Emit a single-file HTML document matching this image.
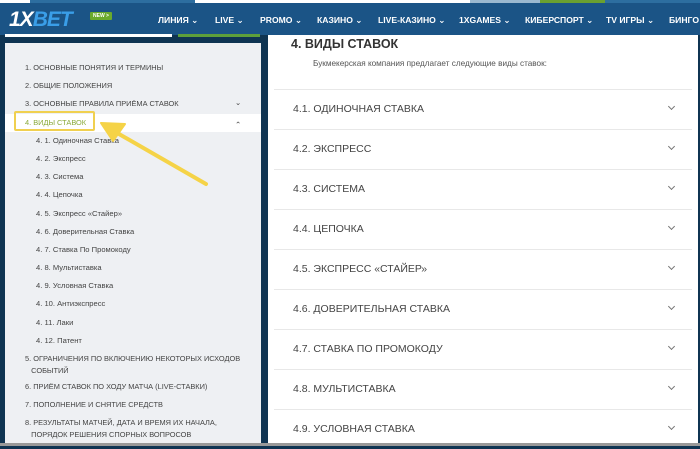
<!DOCTYPE html>
<html><head><meta charset="utf-8"><style>
*{margin:0;padding:0;box-sizing:border-box}
body{width:700px;height:446px;overflow:hidden;background:#0f3452;font-family:"Liberation Sans","DejaVu Sans",sans-serif;position:relative}
.top{position:absolute;left:0;top:0;width:700px;height:4px;background:#fff}
.hdr{position:absolute;left:0;top:3px;width:700px;height:32px;background:#1b5486}
.logo{position:absolute;left:9px;top:5px;color:#fff;font-weight:bold;font-style:italic;font-size:21px;letter-spacing:-1px}
.logo b{color:#3a9ee8}
.new{position:absolute;left:90px;top:9px;background:#6aaa2c;color:#fff;font-size:5px;padding:1px 3px;border-radius:1px;font-weight:bold}
.nav{position:absolute;top:15px;color:#fff;font-size:8.6px;font-weight:bold;white-space:nowrap}
.nav span{position:absolute}
.left{position:absolute;left:5px;top:43px;width:256px;height:401px;background:#eef0f3}
.bar1{position:absolute;left:5px;top:34px;width:167px;height:3px;background:#fff}
.bar2{position:absolute;left:178px;top:34px;width:82px;height:3px;background:#5d9f3a}
.li{position:absolute;font-size:7.4px;color:#444;white-space:nowrap;line-height:12px}
.sub{left:36px;font-size:7.6px}
.main{left:25px}
.right{position:absolute;left:268px;top:35px;width:430px;height:409px;background:#fff}
.h{position:absolute;left:291px;top:37px;font-size:12.5px;font-weight:bold;color:#333}
.p{position:absolute;left:313px;top:59px;font-size:8.2px;color:#555}
.row{position:absolute;left:274px;width:418px;height:40px;border-top:1px solid #e8e8e8}
.row span{position:absolute;left:19px;top:13px;font-size:10.5px;color:#444}
.chev{position:absolute;right:18px;top:14px;width:5px;height:5px;border-right:1px solid #777;border-bottom:1px solid #777;transform:rotate(45deg)}
.bot{position:absolute;left:0;top:443px;width:700px;height:3px;background:#999}
</style></head><body>
<div class="top"></div>
<div style="position:absolute;left:30px;top:0;width:165px;height:3px;background:#2d6ea0"></div>
<div style="position:absolute;left:470px;top:0;width:70px;height:3px;background:#9ab8d0"></div>
<div style="position:absolute;left:540px;top:0;width:65px;height:3px;background:#6aa030"></div>
<div style="position:absolute;left:605px;top:0;width:95px;height:3px;background:#2d6ea0"></div>
<div class="hdr">
<div class="logo">1X<b>BET</b></div>
<div class="new">NEW &gt;</div>
</div>
<div class="nav">
<span style="left:158px">ЛИНИЯ ⌄</span>
<span style="left:215px">LIVE ⌄</span>
<span style="left:260px">PROMO ⌄</span>
<span style="left:317px">КАЗИНО ⌄</span>
<span style="left:378px">LIVE-КАЗИНО ⌄</span>
<span style="left:459px">1XGAMES ⌄</span>
<span style="left:525px">КИБЕРСПОРТ ⌄</span>
<span style="left:606px">TV ИГРЫ ⌄</span>
<span style="left:669px">БИНГО ⌄</span>
</div>
<div class="bar1"></div><div class="bar2"></div>
<div class="left"></div>
<div style="position:absolute;left:5px;top:114px;width:256px;height:18px;background:#fff"></div>
<div class="li main" style="top:62px">1. ОСНОВНЫЕ ПОНЯТИЯ И ТЕРМИНЫ</div>
<div class="li main" style="top:80px">2. ОБЩИЕ ПОЛОЖЕНИЯ</div>
<div class="li main" style="top:98px">3. ОСНОВНЫЕ ПРАВИЛА ПРИЁМА СТАВОК</div>
<div class="li" style="left:235px;top:97px">⌄</div>
<div class="li main" style="top:117px;color:#8aaa3a">4. ВИДЫ СТАВОК</div>
<div class="li" style="left:235px;top:119px">⌃</div>
<div style="position:absolute;left:14px;top:111px;width:81px;height:20px;border:2px solid #f0d050;border-radius:2px"></div>
<div class="li sub" style="top:135px">4. 1. Одиночная Ставка</div>
<div class="li sub" style="top:153px">4. 2. Экспресс</div>
<div class="li sub" style="top:171px">4. 3. Система</div>
<div class="li sub" style="top:189px">4. 4. Цепочка</div>
<div class="li sub" style="top:208px">4. 5. Экспресс «Стайер»</div>
<div class="li sub" style="top:226px">4. 6. Доверительная Ставка</div>
<div class="li sub" style="top:244px">4. 7. Ставка По Промокоду</div>
<div class="li sub" style="top:262px">4. 8. Мультиставка</div>
<div class="li sub" style="top:280px">4. 9. Условная Ставка</div>
<div class="li sub" style="top:298px">4. 10. Антиэкспресс</div>
<div class="li sub" style="top:317px">4. 11. Лаки</div>
<div class="li sub" style="top:335px">4. 12. Патент</div>
<div class="li main" style="top:353px;left:25px">5. ОГРАНИЧЕНИЯ ПО ВКЛЮЧЕНИЮ НЕКОТОРЫХ ИСХОДОВ<br>&nbsp;&nbsp;&nbsp;СОБЫТИЙ</div>
<div class="li main" style="top:381px">6. ПРИЁМ СТАВОК ПО ХОДУ МАТЧА (LIVE-СТАВКИ)</div>
<div class="li main" style="top:399px">7. ПОПОЛНЕНИЕ И СНЯТИЕ СРЕДСТВ</div>
<div class="li main" style="top:417px">8. РЕЗУЛЬТАТЫ МАТЧЕЙ, ДАТА И ВРЕМЯ ИХ НАЧАЛА,<br>&nbsp;&nbsp;&nbsp;ПОРЯДОК РЕШЕНИЯ СПОРНЫХ ВОПРОСОВ</div>
<svg style="position:absolute;left:0;top:0" width="300" height="200"><line x1="206" y1="184" x2="112" y2="130" stroke="#f5d347" stroke-width="4" stroke-linecap="round"/><path d="M101 123 L125 124 L113 141 Z" fill="#f5d347" stroke="#f5d347" stroke-width="2" stroke-linejoin="round"/></svg>
<div class="right"></div>
<div class="h">4. ВИДЫ СТАВОК</div>
<div class="p">Букмекерская компания предлагает следующие виды ставок:</div>
<div class="row" style="top:89px"><span>4.1. ОДИНОЧНАЯ СТАВКА</span><i class="chev"></i></div>
<div class="row" style="top:129px"><span>4.2. ЭКСПРЕСС</span><i class="chev"></i></div>
<div class="row" style="top:169px"><span>4.3. СИСТЕМА</span><i class="chev"></i></div>
<div class="row" style="top:209px"><span>4.4. ЦЕПОЧКА</span><i class="chev"></i></div>
<div class="row" style="top:249px"><span>4.5. ЭКСПРЕСС «СТАЙЕР»</span><i class="chev"></i></div>
<div class="row" style="top:289px"><span>4.6. ДОВЕРИТЕЛЬНАЯ СТАВКА</span><i class="chev"></i></div>
<div class="row" style="top:329px"><span>4.7. СТАВКА ПО ПРОМОКОДУ</span><i class="chev"></i></div>
<div class="row" style="top:369px"><span>4.8. МУЛЬТИСТАВКА</span><i class="chev"></i></div>
<div class="row" style="top:409px"><span>4.9. УСЛОВНАЯ СТАВКА</span><i class="chev"></i></div>
<div class="bot"></div>
</body></html>
